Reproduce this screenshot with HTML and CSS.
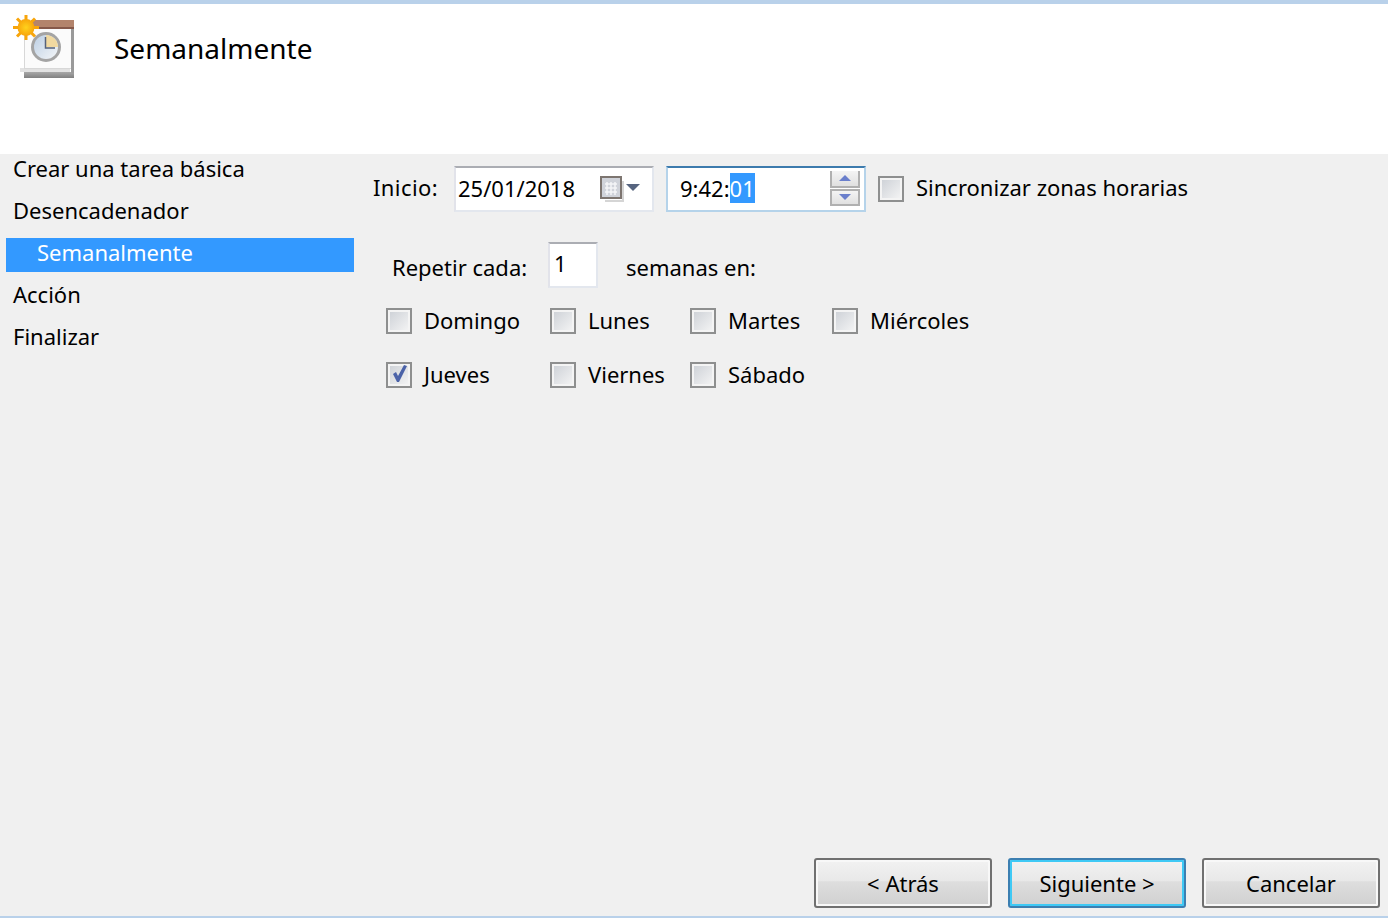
FILE: index.html
```html
<!DOCTYPE html>
<html lang="es">
<head>
    <meta charset="UTF-8">
    <title>Semanalmente</title>
    <link rel="stylesheet" href="styles.css">
</head>
<body>
    <header class="header">
        <svg class="task-icon" width="64" height="64" viewBox="0 0 64 64">
            <defs>
                <radialGradient id="sunFill" cx="50%" cy="50%" r="50%">
                    <stop offset="0" stop-color="#ffd21c"/>
                    <stop offset="1" stop-color="#f8a50b"/>
                </radialGradient>
                <linearGradient id="faceFill" x1="0" y1="0" x2="1" y2="1">
                    <stop offset="0" stop-color="#bccfe4"/>
                    <stop offset="1" stop-color="#f4f6f8"/>
                </linearGradient>
                <linearGradient id="baseFill" x1="0" y1="0" x2="0" y2="1">
                    <stop offset="0" stop-color="#a8a8a8"/>
                    <stop offset="1" stop-color="#808080"/>
                </linearGradient>
            </defs>
            <rect x="13" y="57" width="50" height="6" fill="url(#baseFill)"/>
            <rect x="9" y="53" width="50" height="4" fill="#e2e2e2"/>
            <rect x="13.500" y="10.500" width="47" height="43" fill="#fbfbfb" stroke="#d8d8d8"/>
            <rect x="60" y="12" width="3" height="46" fill="#9a9a9a"/>
            <rect x="20" y="5" width="43" height="7" fill="#b3846c"/>
            <rect x="20" y="12" width="43" height="2" fill="#86594a"/>
            <circle cx="35" cy="32" r="15" fill="#a4a4a4"/>
            <circle cx="35" cy="32" r="12" fill="url(#faceFill)"/>
            <path d="M35 32V20A12 12 0 0 1 47 32Z" fill="#f1d9a0"/>
            <path d="M34.500 22V33H44" fill="none" stroke="#56627a" stroke-width="1.500"/>
            <path d="M15 0V25M2 12.500H28M6 3.500L24 21.500M24 3.500L6 21.500" stroke="#f8a50b" stroke-width="3"/>
            <circle cx="15" cy="12.500" r="8.500" fill="url(#sunFill)"/>
        </svg>
        <h1 class="title">Semanalmente</h1>
    </header>

    <div class="content">
        <!-- Wizard steps -->
        <nav class="steps">
            <div class="step">Crear una tarea básica</div>
            <div class="step">Desencadenador</div>
            <div class="step step-active">Semanalmente</div>
            <div class="step">Acción</div>
            <div class="step">Finalizar</div>
        </nav>

        <main class="form">
            <div class="start-row">
                <span class="start-label">Inicio:</span>
                <div class="field date-field">
                    <span class="date-value">25/01/2018</span>
                    <svg class="calendar" width="42" height="26" viewBox="0 0 42 26">
                        <path d="M25 5v20H7" fill="none" stroke="#d5d5d5" stroke-width="2"/>
                        <rect x="3" y="1" width="20" height="21" fill="#d0d3da" stroke="#7d7570" stroke-width="2"/>
                        <path d="M7 8h12M7 12h12M7 16h12M9 6v13M13 6v13M17 6v13" stroke="#f4f5f7" stroke-width="1.500"/>
                        <path d="M28 8h14l-7 7z" fill="#56647f"/>
                    </svg>
                </div>
                <div class="field time-field">
                    <span class="time-value">9:42:<span class="time-selected">01</span></span>
                    <div class="spinner">
                        <span class="spin-button spin-up"><svg width="12" height="6" viewBox="0 0 12 6"><path d="M6 0l6 6H0z" fill="#6a7fcc"/></svg></span>
                        <span class="spin-button spin-down"><svg width="12" height="6" viewBox="0 0 12 6"><path d="M0 0h12L6 6z" fill="#6a7fcc"/></svg></span>
                    </div>
                </div>
                <label class="check-item sync-check">
                    <input type="checkbox" class="check-box">
                    <span class="check-text">Sincronizar zonas horarias</span>
                </label>
            </div>

            <div class="repeat-row">
                <span class="repeat-label">Repetir cada:</span>
                <div class="field repeat-field">1</div>
                <span class="repeat-text">semanas en:</span>
            </div>

            <div class="days">
                <label class="check-item"><input type="checkbox" class="check-box"><span class="day-text">Domingo</span></label>
                <label class="check-item"><input type="checkbox" class="check-box"><span class="day-text">Lunes</span></label>
                <label class="check-item"><input type="checkbox" class="check-box"><span class="day-text">Martes</span></label>
                <label class="check-item"><input type="checkbox" class="check-box"><span class="day-text">Miércoles</span></label>
                <label class="check-item"><input type="checkbox" class="check-box" checked><span class="day-text">Jueves</span></label>
                <label class="check-item"><input type="checkbox" class="check-box"><span class="day-text">Viernes</span></label>
                <label class="check-item"><input type="checkbox" class="check-box"><span class="day-text">Sábado</span></label>
            </div>
        </main>
    </div>

    <footer class="footer">
        <button class="btn">&lt; Atrás</button>
        <button class="btn btn-default">Siguiente &gt;</button>
        <button class="btn">Cancelar</button>
    </footer>
</body>
</html>
```

FILE: styles.css
```css
* { box-sizing: border-box; }

body {
    margin: 0;
    height: 918px;
    overflow: hidden;
    display: flex;
    flex-direction: column;
    background-color: #f0f0f0;
    border-top: 4px solid #b9d1ea;
    border-bottom: 2px solid #b9d1ea;
    font-family: "Noto Sans", sans-serif;
    font-size: 22px;
    color: #000;
}

.header {
    height: 150px;
    flex: none;
    display: flex;
    align-items: flex-start;
    background: #fff;
    padding: 11px 0 0 11px;
}
.task-icon { flex: none; overflow: visible; }
.title {
    margin: 13px 0 0 39px;
    font-size: 28px;
    font-weight: 400;
    line-height: 40px;
}

.content { flex: 1; display: flex; }

.steps {
    width: 354px;
    flex: none;
    padding-left: 6px;
    display: flex;
    flex-direction: column;
    gap: 8px;
}
.step {
    height: 34px;
    line-height: 29px;
    padding-left: 7px;
}
.step-active {
    background: #3399ff;
    color: #fff;
    padding-left: 31px;
}

.form { flex: 1; padding: 12px 0 0 19px; }

.start-row { display: flex; align-items: center; height: 46px; }
.start-label { width: 81px; margin-top: -4px; letter-spacing: 0.4px; }

.field {
    background: #fff;
    border: 2px solid #e3e7ee;
    border-top-color: #abadb3;
    border-left-color: #e2e3ea;
}
.date-field {
    width: 200px;
    height: 46px;
    display: flex;
    align-items: center;
    justify-content: space-between;
    padding: 0 12px 0 2px;
}
.date-value, .time-value { margin-top: -2px; }
.calendar { flex: none; }
.time-field {
    width: 200px;
    height: 46px;
    margin-left: 12px;
    display: flex;
    align-items: center;
    justify-content: space-between;
    padding: 0 4px 0 12px;
    border-color: #b5d3ea;
    border-top-color: #3d7bad;
}
.time-selected { background: #3399ff; color: #fff; display: inline-block; line-height: 30px; }
.spinner { display: flex; flex-direction: column; gap: 1px; margin-top: -2px; }
.spin-button {
    width: 30px;
    height: 17px;
    display: flex;
    align-items: center;
    justify-content: center;
    background: linear-gradient(#f4f4f4, #e0e0e0);
    border: 2px solid #b0b0b0;
}
.spin-up { border-top: 0; }

.sync-check { margin-left: 12px; }
.check-text { margin-top: -4px; }

.check-item { display: flex; align-items: center; gap: 12px; }
.check-box {
    appearance: none;
    margin: 0;
    width: 26px;
    height: 26px;
    flex: none;
    border: 2px solid #8e8f8f;
    background: linear-gradient(135deg, #cbcfd5, #f6f6f6);
    box-shadow: inset 0 0 0 2px #f4f4f4;
}
.check-box:checked { position: relative; }
.check-box:checked::after {
    content: "";
    position: absolute;
    left: 5px;
    top: 1px;
    width: 14px;
    height: 17px;
    background: #4a62a8;
    clip-path: polygon(0 9px, 3px 7px, 5px 11px, 11px 0, 14px 1px, 6px 17px, 4px 17px);
}
.day-text { margin-top: -2px; }

.repeat-row { display: flex; align-items: center; margin-top: 30px; padding-left: 19px; height: 46px; }
.repeat-label { width: 156px; margin-top: 4px; }
.repeat-text { margin-top: 4px; }
.repeat-field {
    width: 50px;
    height: 46px;
    margin-right: 28px;
    padding-left: 4px;
    line-height: 38px;
}

.days {
    display: grid;
    grid-template-columns: 164px 140px 142px auto;
    grid-auto-rows: 54px;
    margin-top: 6px;
    padding-left: 13px;
}

.footer {
    flex: none;
    display: flex;
    justify-content: flex-end;
    gap: 16px;
    padding: 0 8px 8px 0;
}
.btn {
    width: 178px;
    height: 50px;
    padding: 0;
    font: inherit;
    color: #000;
    border: 2px solid #707070;
    border-radius: 3px;
    background: linear-gradient(#f2f2f2 0, #e8e8e8 46%, #dedede 47%, #d0d0d0 100%);
    box-shadow: inset 0 0 0 2px #f8f8f8;
}
.btn-default {
    border-color: #3c7fb1;
    box-shadow: inset 0 0 0 2px #3fc9f5;
}
```
